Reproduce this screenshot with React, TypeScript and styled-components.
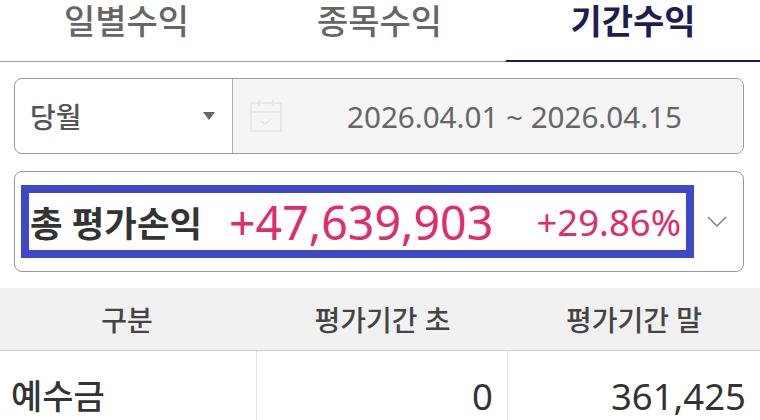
import React from 'react';
import styled, { createGlobalStyle } from 'styled-components';

const GlobalStyle = createGlobalStyle`
    html, body {
        margin: 0;
        padding: 0;
        background: #fff;
        overflow: hidden;
    }
    body {
        font-family: "Noto Sans", "Noto Sans CJK KR", sans-serif;
    }
`;

const Page = styled.div`
    width: 760px;
    height: 420px;
    overflow: hidden;
    display: flex;
    flex-direction: column;
`;

const Tabs = styled.div`
    display: grid;
    grid-template-columns: 253px 253px 254px;
    height: 62px;
    flex: none;
`;

const Tab = styled.div<{ $active?: boolean }>`
    display: flex;
    justify-content: center;
    font-family: "Liberation Sans", "Noto Sans CJK KR", sans-serif;
    font-size: 34px;
    line-height: 44px;
    font-weight: ${(p) => (p.$active ? 700 : 500)};
    color: ${(p) => (p.$active ? '#1d1d4f' : '#666')};
    border-bottom: ${(p) => (p.$active ? '2px solid #1d1d4f' : '1px solid #999')};
    box-sizing: border-box;
`;

const Content = styled.div`
    padding: 16px 16px 0 14px;
    display: flex;
    flex-direction: column;
    gap: 17px;
    flex: none;
`;

const FilterBox = styled.div`
    display: flex;
    height: 76px;
    border: 1px solid #999;
    border-radius: 8px;
    overflow: hidden;
    box-sizing: border-box;
`;

const PeriodSelect = styled.div`
    width: 218px;
    flex: none;
    display: flex;
    align-items: center;
    justify-content: space-between;
    padding: 0 17px 0 15px;
    box-sizing: border-box;
    border-right: 1px solid #aaa;
    font-size: 28px;
    font-weight: 500;
    color: #555;
`;

const Caret = styled.span`
    width: 0;
    height: 0;
    border-left: 6px solid transparent;
    border-right: 6px solid transparent;
    border-top: 8px solid #666;
`;

const DateField = styled.div`
    flex: 1;
    display: flex;
    align-items: center;
    background: #f5f5f5;
    padding-left: 16px;
`;

const DateText = styled.div`
    flex: 1;
    text-align: center;
    padding-left: 3px;
    font-size: 29.6px;
    color: #666;
    white-space: nowrap;
`;

const SummaryCard = styled.div`
    height: 101px;
    border: 1px solid #999;
    border-radius: 8px;
    box-sizing: border-box;
    display: flex;
    align-items: center;
    padding-left: 6px;
`;

const Highlight = styled.div`
    width: 673px;
    height: 73px;
    flex: none;
    border: 8px solid #3f48c8;
    box-sizing: border-box;
    display: flex;
    align-items: center;
    padding: 0 5px 0 1px;
`;

const SummaryLabel = styled.span`
    font-size: 35.4px;
    font-weight: 700;
    color: #333;
    white-space: nowrap;
`;

const SummaryAmount = styled.span`
    font-size: 46.5px;
    color: #de2c6e;
    white-space: nowrap;
    margin-left: 27px;
`;

const SummaryRate = styled.span`
    font-size: 36.5px;
    color: #de2c6e;
    white-space: nowrap;
    margin-left: auto;
`;

const Chevron = styled.svg`
    width: 22px;
    height: 14px;
    margin-left: 12px;
    flex: none;
`;

const TableHead = styled.div`
    display: grid;
    grid-template-columns: 257px 251px 252px;
    height: 63px;
    margin-top: 16px;
    flex: none;
    background: #f1f1f1;
    border-bottom: 1px solid #ccc;
    box-sizing: border-box;
`;

const HeadCell = styled.div`
    display: flex;
    align-items: center;
    justify-content: center;
    font-size: 28px;
    font-weight: 500;
    color: #444;

    &:first-child {
        padding-right: 3px;
    }
`;

const TableRow = styled.div`
    display: grid;
    grid-template-columns: 257px 251px 252px;
    flex: 1;
`;

const RowLabel = styled.div`
    padding: 20px 0 0 11px;
    font-size: 34px;
    line-height: 50px;
    font-weight: 500;
    color: #333;
    border-right: 1px solid #e2e2e2;
`;

const RowValue = styled.div`
    padding: 20px 14px 0 0;
    text-align: right;
    font-size: 36.5px;
    line-height: 50px;
    color: #333;
    border-right: 1px solid #e2e2e2;

    &:last-child {
        border-right: none;
    }
`;

const CalendarIcon: React.FC = () => (
    <svg width="34" height="34" viewBox="0 0 34 34" fill="none" stroke="#e2e2e2" strokeWidth="1.5">
        <rect x="2" y="4" width="30" height="28" />
        <path d="M2 13h30M10 1v6M24 1v6" />
        <path d="M12 22l4 3 6-5" />
    </svg>
);

const App: React.FC = () => {
    return (
        <Page>
            <GlobalStyle />
            <Tabs>
                <Tab>일별수익</Tab>
                <Tab>종목수익</Tab>
                <Tab $active>기간수익</Tab>
            </Tabs>
            <Content>
                <FilterBox>
                    <PeriodSelect>
                        당월
                        <Caret />
                    </PeriodSelect>
                    <DateField>
                        <CalendarIcon />
                        <DateText>2026.04.01 ~ 2026.04.15</DateText>
                    </DateField>
                </FilterBox>
                <SummaryCard>
                    <Highlight>
                        <SummaryLabel>총 평가손익</SummaryLabel>
                        <SummaryAmount>+47,639,903</SummaryAmount>
                        <SummaryRate>+29.86%</SummaryRate>
                    </Highlight>
                    <Chevron viewBox="0 0 22 14" fill="none" stroke="#777" strokeWidth="1.3">
                        <path d="M2 2l9 9 9-9" />
                    </Chevron>
                </SummaryCard>
            </Content>
            <TableHead>
                <HeadCell>구분</HeadCell>
                <HeadCell>평가기간 초</HeadCell>
                <HeadCell>평가기간 말</HeadCell>
            </TableHead>
            <TableRow>
                <RowLabel>예수금</RowLabel>
                <RowValue>0</RowValue>
                <RowValue>361,425</RowValue>
            </TableRow>
        </Page>
    );
};

export default App;
